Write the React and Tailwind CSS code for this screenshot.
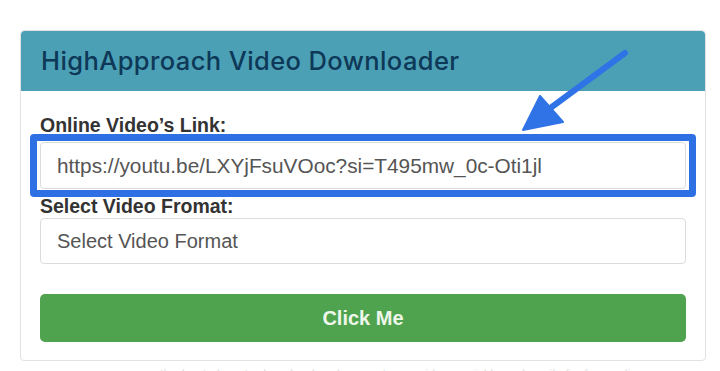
export default function App() {
  return (
    <div className="relative w-[720px] h-[371px] overflow-hidden bg-white pt-[30px] pl-[20px]">
      <div className="w-[686px] h-[331px] border border-[#e2e2e2] rounded-[4px] flex flex-col">
        <div className="h-[60px] bg-[#4ba0b6] rounded-t-[4px] flex items-center px-[20px]">
          <h1 className="text-[25.5px] font-medium text-[#0e3857] tracking-[0.4px]" style={{ fontFamily: "Inter, 'Noto Sans', sans-serif" }}>
            HighApproach Video Downloader
          </h1>
        </div>
        <div className="px-[19px] pt-[24px] flex flex-col" style={{ fontFamily: "'Liberation Sans', Arial, sans-serif" }}>
          <label className="text-[19.5px] leading-[20px] font-bold text-[#333]">Online Video’s Link:</label>
          <div className="relative mt-[7px]">
            <div className="h-[47px] border border-[#dcdcdc] rounded-[4px] flex items-center px-[16px] text-[20.8px] text-[#555]">
              https://youtu.be/LXYjFsuVOoc?si=T495mw_0c-Oti1jl
            </div>
            <div className="absolute left-[-10px] right-[-10px] top-[-8px] bottom-[-8px] border-[7px] border-[#2f6fe4] rounded-[4px]"></div>
          </div>
          <label className="mt-[7px] text-[19.5px] leading-[20px] font-bold text-[#333]">Select Video Fromat:</label>
          <div className="mt-[2px] h-[46px] border border-[#dcdcdc] rounded-[4px] flex items-center px-[16px] text-[20px] text-[#555]">
            Select Video Format
          </div>
          <button className="mt-[30px] h-[48px] rounded-[5px] bg-[#4fa34f] text-[#eef7ea] text-[20px] font-bold">
            Click Me
          </button>
        </div>
      </div>
      <div className="absolute left-[160px] top-[364px] text-[13px] text-[#e4e4e4] whitespace-nowrap" style={{ fontFamily: "'Liberation Sans', Arial, sans-serif" }}>
        the best place to download and convert your videos quickly and easily for free online
      </div>
      <svg className="absolute left-0 top-0 pointer-events-none" width="720" height="371">
        <line x1="625" y1="53" x2="545" y2="112" stroke="#2f73e6" strokeWidth="6" strokeLinecap="round" />
        <polygon points="523,130 540,96 563,122" fill="#2f73e6" stroke="#2f73e6" strokeWidth="2" strokeLinejoin="round" />
      </svg>
    </div>
  );
}
